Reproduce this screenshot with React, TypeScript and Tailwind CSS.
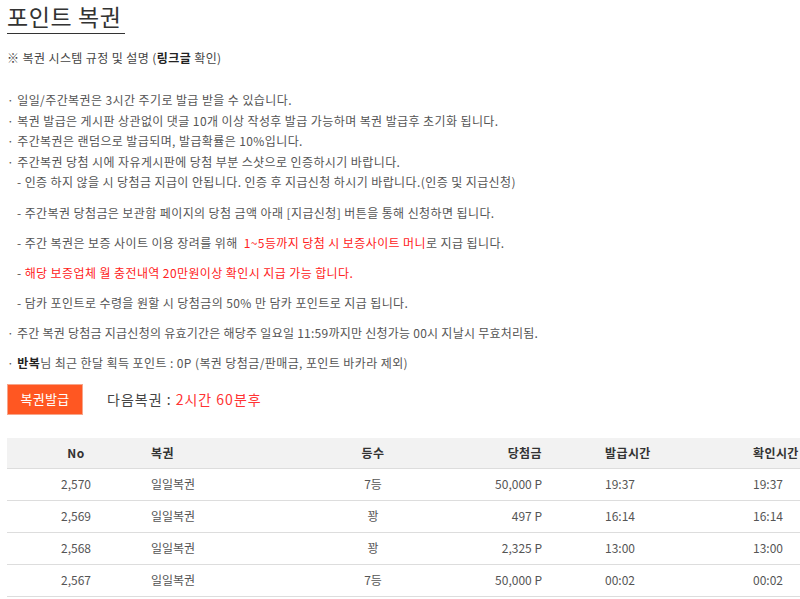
import React from 'react';

const font = { fontFamily: '"Noto Sans CJK KR", "Noto Sans", sans-serif' };

type Row = { no: string; name: string; rank: string; prize: string; issued: string; checked: string };

const rows: Row[] = [
  { no: '2,570', name: '일일복권', rank: '7등', prize: '50,000 P', issued: '19:37', checked: '19:37' },
  { no: '2,569', name: '일일복권', rank: '꽝', prize: '497 P', issued: '16:14', checked: '16:14' },
  { no: '2,568', name: '일일복권', rank: '꽝', prize: '2,325 P', issued: '13:00', checked: '13:00' },
  { no: '2,567', name: '일일복권', rank: '7등', prize: '50,000 P', issued: '00:02', checked: '00:02' }
];

const cols = 'grid grid-cols-[138px_155px_146px_100px_207px_120px]';

export default function App() {
  return (
    <div className="w-[800px] h-[599px] overflow-hidden bg-white text-[12px] text-[#555]" style={font}>
      <div className="pl-[7px]">
        {/* Title */}
        <h1 className="w-fit pr-[3px] border-b border-[#333] text-[23px] leading-[33px] text-[#333] font-normal tracking-[0.6px]">
          포인트 복권
        </h1>

        <p className="mt-[14px] leading-[20px] text-[#444] tracking-[0.4px]">
          ※ 복권 시스템 규정 및 설명 (<b className="text-[#222]">링크글</b> 확인)
        </p>

        {/* Rules */}
        <div className="mt-[22px] leading-[20.5px] tracking-[0.4px]">
          <p>· 일일/주간복권은 3시간 주기로 발급 받을 수 있습니다.</p>
          <p>· 복권 발급은 게시판 상관없이 댓글 10개 이상 작성후 발급 가능하며 복권 발급후 초기화 됩니다.</p>
          <p>· 주간복권은 랜덤으로 발급되며, 발급확률은 10%입니다.</p>
          <p>· 주간복권 당첨 시에 자유게시판에 당첨 부분 스샷으로 인증하시기 바랍니다.</p>
          <p className="pl-[10px]">- 인증 하지 않을 시 당첨금 지급이 안됩니다. 인증 후 지급신청 하시기 바랍니다.(인증 및 지급신청)</p>
        </div>
        <div className="mt-[5px] leading-[30px] tracking-[0.4px]">
          <p className="pl-[10px]">- 주간복권 당첨금은 보관함 페이지의 당첨 금액 아래 [지급신청] 버튼을 통해 신청하면 됩니다.</p>
          <p className="pl-[10px]">
            - 주간 복권은 보증 사이트 이용 장려를 위해 <span className="ml-[3px] text-[#f22]">1~5등까지 당첨 시 보증사이트 머니</span>로 지급 됩니다.
          </p>
          <p className="pl-[10px]">
            - <span className="text-[#f22]">해당 보증업체 월 충전내역 20만원이상 확인시 지급 가능 합니다.</span>
          </p>
          <p className="pl-[10px]">- 담카 포인트로 수령을 원할 시 당첨금의 50% 만 담카 포인트로 지급 됩니다.</p>
          <p className="tracking-[0.25px]">· 주간 복권 당첨금 지급신청의 유효기간은 해당주 일요일 11:59까지만 신청가능 00시 지날시 무효처리됨.</p>
          <p>
            · <b className="text-[#222]">반복</b>님 최근 한달 획득 포인트 : 0P (복권 당첨금/판매금, 포인트 바카라 제외)
          </p>
        </div>

        {/* Issue button */}
        <div className="mt-[6px] flex items-center">
          <button className="h-[31px] w-[76px] bg-[#ff5722] border border-[#f7a58a] text-white text-[13px] tracking-[0.3px]">
            복권발급
          </button>
          <span className="ml-[24px] text-[14px] text-[#444] tracking-[1px]">
            다음복권 : <span className="text-[#f33]">2시간 60분후</span>
          </span>
        </div>

        {/* History table */}
        <div className="mt-[23px] w-[866px]">
          <div className={`${cols} h-[31px] items-center bg-[#f2f2f2] border-b border-[#ddd] font-bold text-[#333] tracking-[0.4px]`}>
            <div className="text-center">No</div>
            <div className="pl-[6px]">복권</div>
            <div className="text-center">등수</div>
            <div className="text-right pr-[4px]">당첨금</div>
            <div className="pl-[59px]">발급시간</div>
            <div>확인시간</div>
          </div>
          {rows.map((r) => (
            <div key={r.no} className={`${cols} h-[32px] items-center border-b border-[#ddd]`}>
              <div className="text-center">{r.no}</div>
              <div className="pl-[6px]">{r.name}</div>
              <div className="text-center">{r.rank}</div>
              <div className="text-right pr-[4px]">{r.prize}</div>
              <div className="pl-[59px]">{r.issued}</div>
              <div>{r.checked}</div>
            </div>
          ))}
        </div>
      </div>
    </div>
  );
}
